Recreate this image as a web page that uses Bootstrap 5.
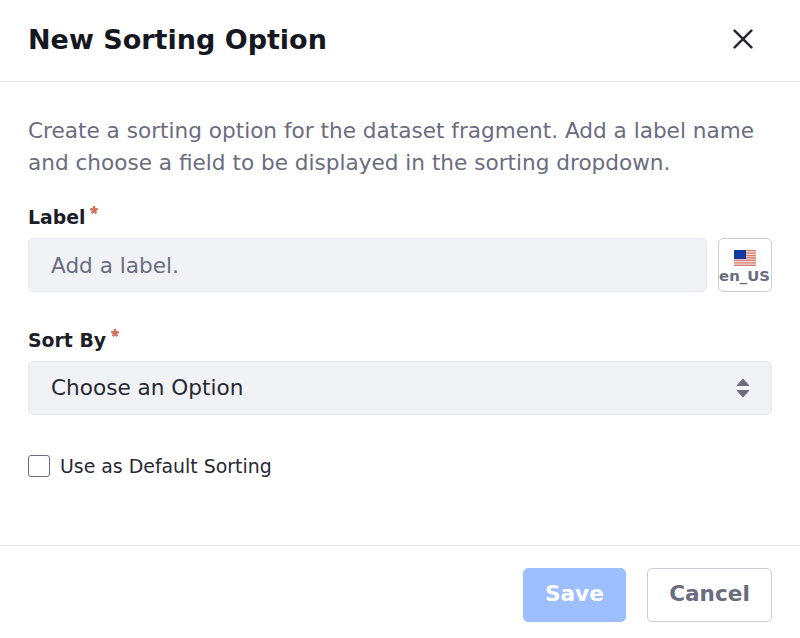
<!DOCTYPE html>
<html lang="en">
<head>
<meta charset="utf-8">
<meta name="viewport" content="width=device-width, initial-scale=1">
<title>New Sorting Option</title>
<link href="https://cdn.jsdelivr.net/npm/bootstrap@5.3.0/dist/css/bootstrap.min.css" rel="stylesheet">
<style>
  body { font-family: "DejaVu Sans", sans-serif; font-size: 21.6px; line-height: 32.2px; color: #272833; }
  .sheet { height: 638px; border: 0; border-radius: 0; overflow: hidden; }
  .sheet .modal-header { height: 82px; padding: 0 28px; border-bottom: 1px solid #e7e7ed; border-radius: 0; }
  .sheet .modal-title { font-size: 27px; line-height: 32px; font-weight: 700; color: #16171f; margin-top: -1px; }
  .close-btn { width: 43px; height: 43px; margin: -3px 7.5px 0 0; color: #272833; }
  .sheet .modal-body { padding: 33px 28px 0; }
  .intro { color: #6b6c7e; margin-bottom: 25px; }
  .sheet .form-label { display: flex; align-items: flex-start; font-size: 18.85px; line-height: 28px; font-weight: 700; margin-bottom: 6px; height: 28px; color: #1c1d27; }
  .req { width: 10px; height: 10px; margin: 1px 0 0 4px; color: #cf7460; }
  .sheet .form-control, .sheet .form-select { height: 54px; padding: 0 21px 0 22px; font-size: 21.6px; line-height: 52px; border: 1px solid #e7e7ed; border-radius: 5px; background-color: #f1f2f5; color: #272833; }
  .sheet .form-select { background-image: none; line-height: 51px; padding-bottom: 1px; }
  .sheet .form-control::placeholder { color: #6b6c7e; }
  .label-row { gap: 11px; }
  .lang-btn { width: 54px; height: 54px; padding: 6px 1px 0 0; border: 1px solid #cdced9; border-radius: 5px; color: #6b6c7e; font-size: 14.85px; line-height: 20px; font-weight: 700; }
  .field-label { margin-bottom: 35px; }
  .sheet .form-check { gap: 10px; margin-top: 37px; min-height: 0; }
  .sheet .form-check-input { width: 22px; height: 22px; border: 1px solid #6b6c7e; border-radius: 3px; }
  .sheet .form-check-label { font-size: 18.9px; line-height: 28px; }
  .sheet .modal-footer { height: 93px; padding: 22px 28px 0; gap: 21px; border-top: 1px solid #e7e7ed; border-radius: 0; }
  .act { height: 54px; margin: 0 !important; padding: 0 21.2px 2px; font-size: 21.6px; line-height: 50px; font-weight: 700; border-radius: 5px; }
  .act-save, .act-save:disabled { background: #9dbeff; border-color: #9dbeff; color: #fff; opacity: 1; }
  .act-cancel { border: 1px solid #cdced9; color: #6b6c7e; background: #fff; }
  .arrows { right: 22px; }
</style>
</head>
<body>
<svg class="d-none">
  <symbol id="asterisk" viewBox="0 0 10 10"><path d="M5 5V1M5 5L1.2 3.8M5 5L2.7 8.2M5 5l2.3 3.2M5 5l3.8-1.2" stroke="currentColor" stroke-width="2.4"/></symbol>
</svg>
<div class="modal-content sheet">
  <div class="modal-header d-flex align-items-center justify-content-between">
    <h1 class="modal-title">New Sorting Option</h1>
    <button type="button" class="btn close-btn p-0 border-0 d-flex align-items-center justify-content-center" aria-label="Close">
      <svg width="20" height="20" viewBox="0 0 20 20"><path d="M1.6 1.6 18.4 18.4M18.4 1.6 1.6 18.4" stroke="currentColor" stroke-width="2.5" stroke-linecap="round"/></svg>
    </button>
  </div>
  <div class="modal-body">
    <p class="intro">Create a sorting option for the dataset fragment. Add a label name and choose a field to be displayed in the sorting dropdown.</p>
    <div class="field-label">
      <label class="form-label" for="label">Label<svg class="req"><use href="#asterisk"/></svg></label>
      <div class="label-row d-flex">
        <input id="label" class="form-control" type="text" placeholder="Add a label.">
        <button type="button" class="btn lang-btn flex-shrink-0 d-flex flex-column align-items-center justify-content-center">
          <svg width="22" height="16" viewBox="0 0 22 16">
            <path fill="#ead9d7" d="M0 0h22v16H0z"/>
            <path stroke="#d9806f" stroke-width="1.3" d="M0 .7h22M0 3.1h22M0 5.6h22M0 8h22M0 10.4h22M0 12.9h22M0 15.3h22"/>
            <path fill="#1239a0" d="M0 0h12v9H0z"/>
          </svg>
          <span>en_US</span>
        </button>
      </div>
    </div>
    <div>
      <label class="form-label" for="sort">Sort By<svg class="req"><use href="#asterisk"/></svg></label>
      <div class="position-relative">
        <button type="button" id="sort" class="form-select text-start">Choose an Option</button>
        <svg class="arrows position-absolute top-50 translate-middle-y" width="14" height="20" viewBox="0 0 14 20"><path fill="#6b6c7e" stroke="#6b6c7e" stroke-linejoin="round" d="M7 1 12.8 7.5H1.2zM7 19l5.8-6.5H1.2z"/></svg>
      </div>
    </div>
    <div class="form-check d-flex align-items-center p-0 mb-0">
      <input class="form-check-input m-0" type="checkbox" id="default">
      <label class="form-check-label" for="default">Use as Default Sorting</label>
    </div>
  </div>
  <div class="modal-footer d-flex align-items-start justify-content-end">
    <button type="button" class="btn act act-save" disabled>Save</button>
    <button type="button" class="btn act act-cancel">Cancel</button>
  </div>
</div>
<script src="https://cdn.jsdelivr.net/npm/bootstrap@5.3.0/dist/js/bootstrap.bundle.min.js"></script>
</body>
</html>
